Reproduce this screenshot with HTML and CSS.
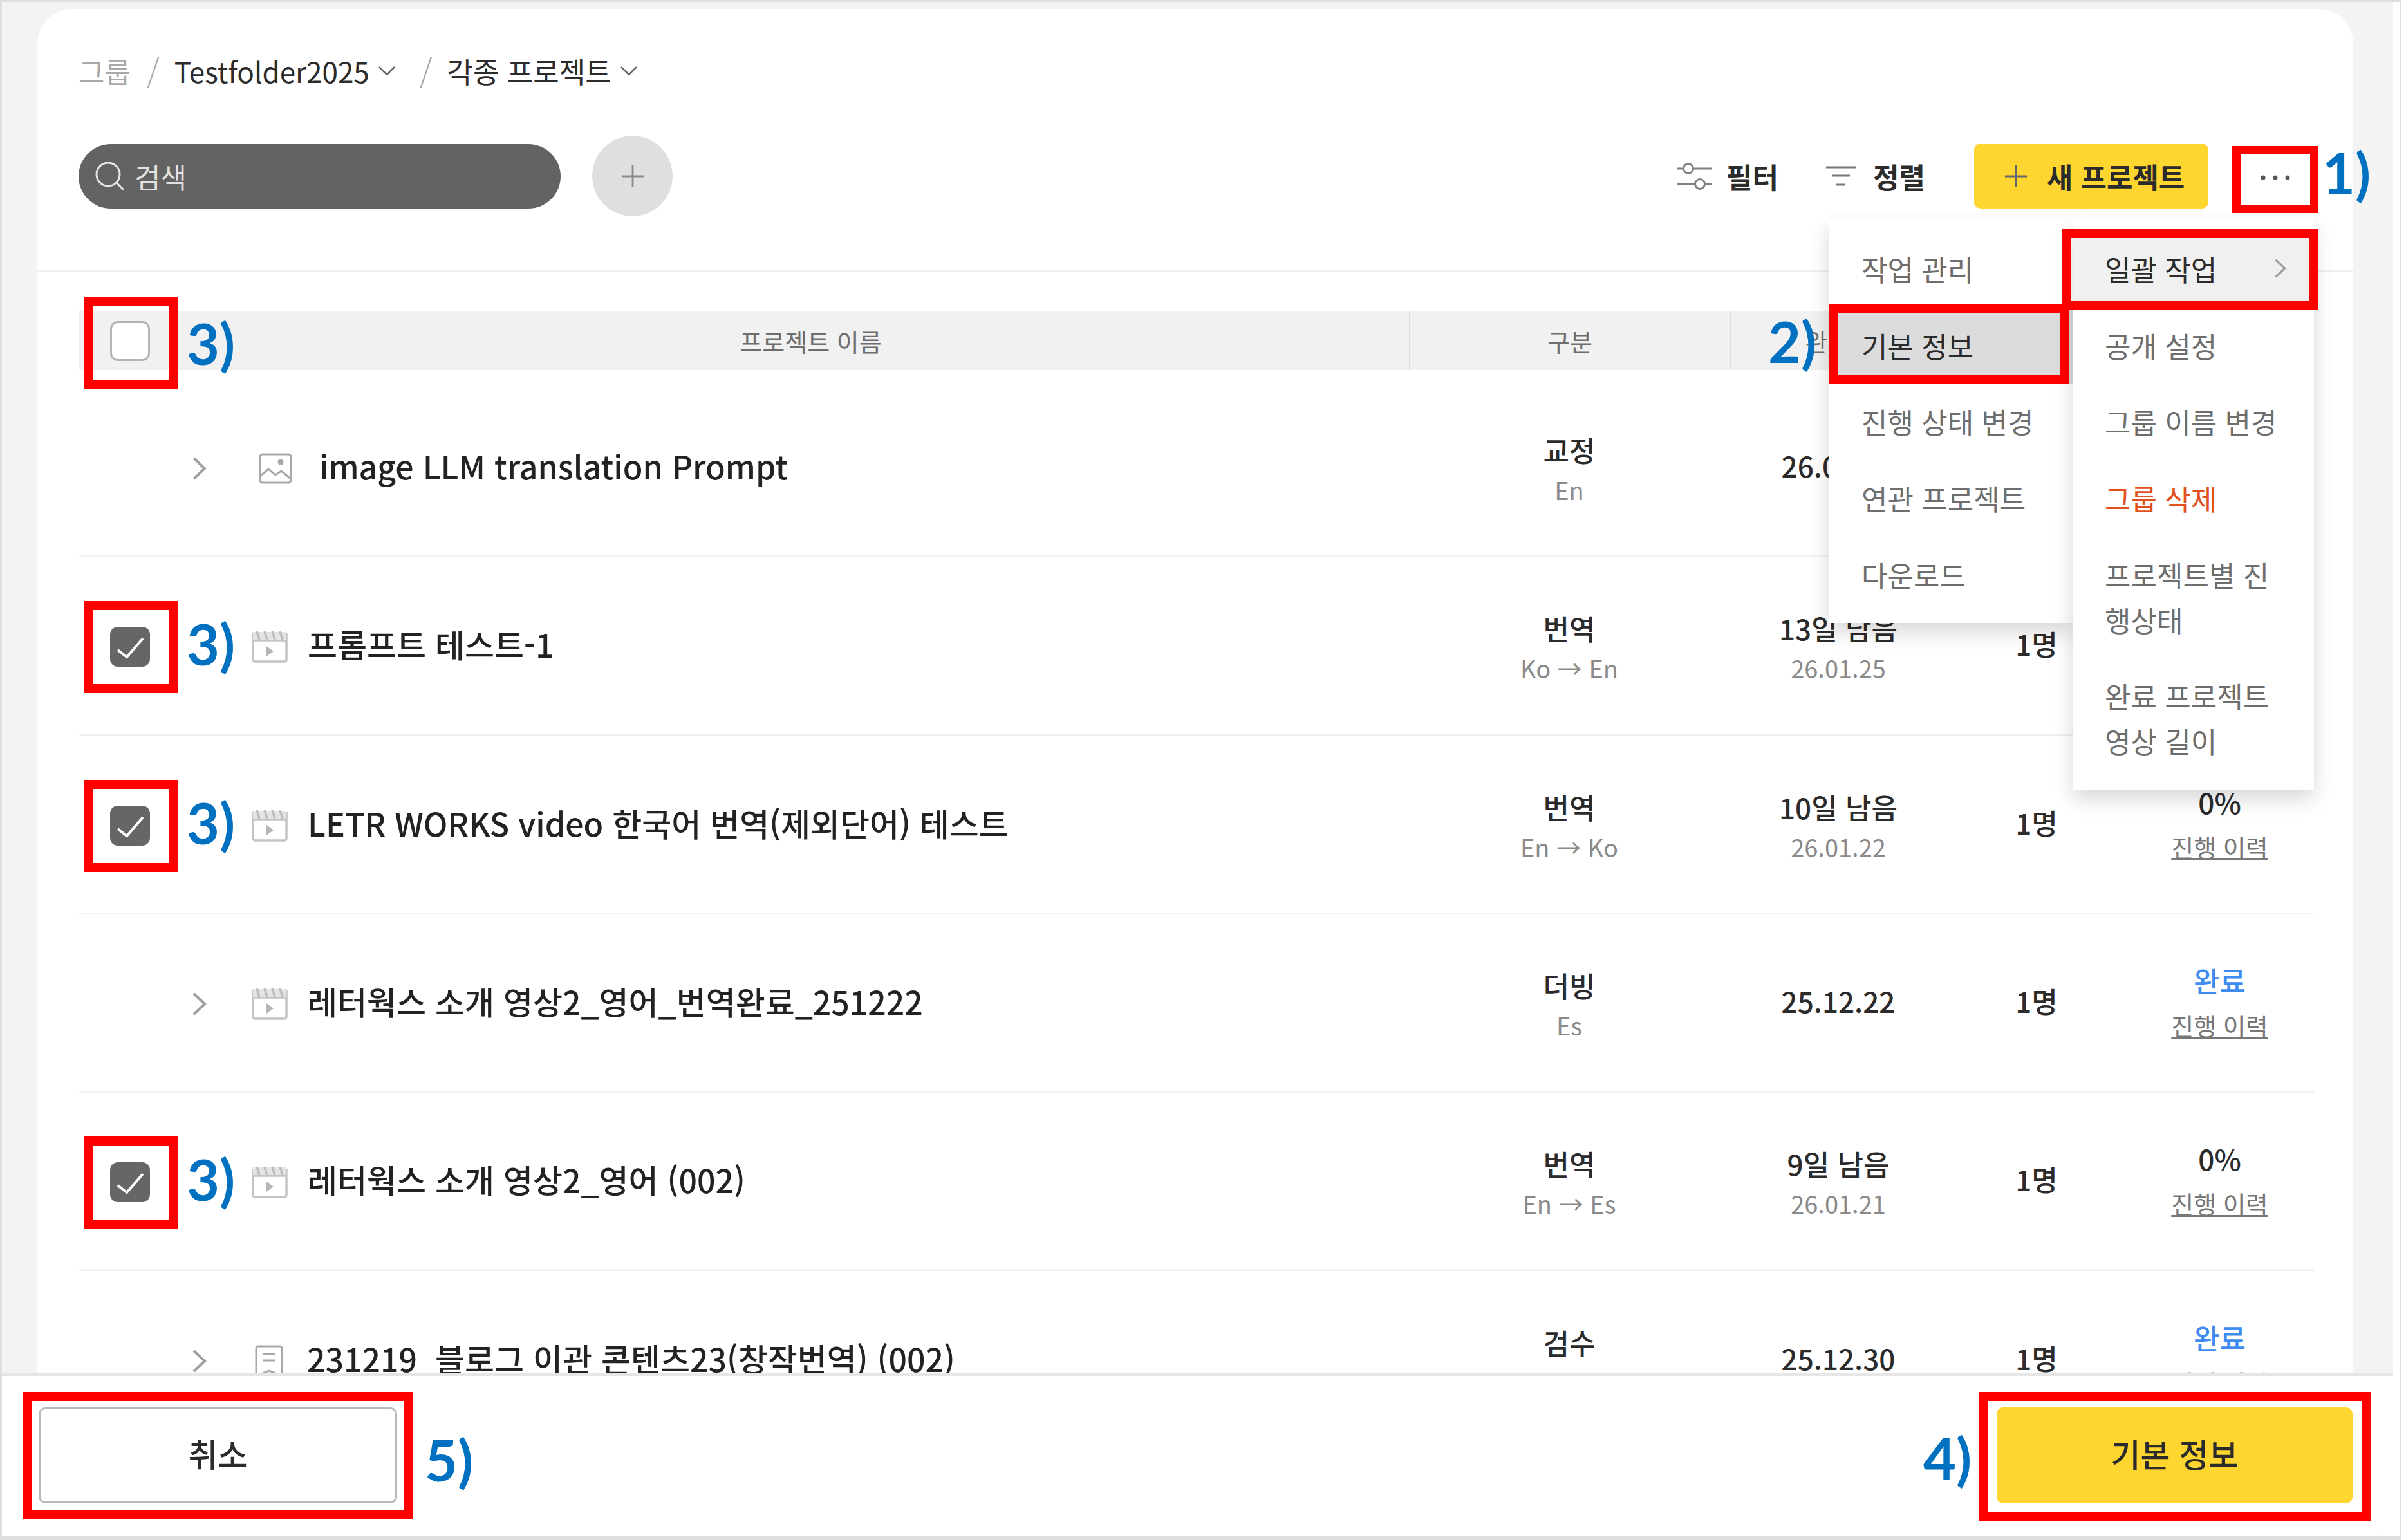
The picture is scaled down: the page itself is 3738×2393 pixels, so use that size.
FILE: index.html
```html
<!DOCTYPE html>
<html lang="ko">
<head>
  <meta charset="UTF-8">
  <meta name="viewport" content="width=device-width, initial-scale=1.0">
  <title>각종 프로젝트</title>
  <link rel="stylesheet" href="styles.css">
</head>
<body>

<svg class="defs" width="0" height="0">
  <symbol id="i-video" viewBox="0 0 56 50">
    <path d="M2 4v41a3 3 0 0 0 3 3h46a3 3 0 0 0 3-3V4M2 15h52" fill="none" stroke="#c4c4c4" stroke-width="3.500"/>
    <path d="M2 2h52v12H2z" fill="#e4e4e4"/>
    <path d="M8 1l4 13M20 1l4 13M32 1l4 13M44 1l4 13" stroke="#bdbdbd" stroke-width="3.500"/>
    <path d="M23 24l11 8-11 8z" fill="#b5b5b5"/>
  </symbol>
  <symbol id="i-image" viewBox="0 0 52 48">
    <rect x="2" y="2" width="48" height="44" rx="4" fill="none" stroke="#a8a8a8" stroke-width="3"/>
    <circle cx="34" cy="14" r="4.500" fill="#a8a8a8"/>
    <path d="M2 36l13-11 11 9 9-6 15 12" fill="none" stroke="#a8a8a8" stroke-width="3"/>
  </symbol>
  <symbol id="i-doc" viewBox="0 0 44 50">
    <path d="M2 48V5a3 3 0 0 1 3-3h34a3 3 0 0 1 3 3v43l-20-8-20 8z" fill="none" stroke="#a8a8a8" stroke-width="3"/>
    <path d="M13 14h18M13 24h18" stroke="#a8a8a8" stroke-width="3"/>
  </symbol>
  <symbol id="i-chev" viewBox="0 0 24 36">
    <path d="M3 2l17 16L3 34" fill="none" stroke="#a0a0a0" stroke-width="4"/>
  </symbol>
  <symbol id="i-check" viewBox="0 0 62 62">
    <path d="M12 36l14 11 25-29" fill="none" stroke="#fff" stroke-width="4"/>
  </symbol>
</svg>

<div class="page">
  <div class="shell">
    <div class="card">
      <div class="crumbs">
        <span class="crumb-root">그룹</span>
        <span class="crumb-sep">/</span>
        <span class="crumb">Testfolder2025</span>
        <svg class="crumb-caret" viewBox="0 0 28 16"><path d="M2 2l12 12L26 2" fill="none" stroke="#666" stroke-width="2.500"/></svg>
        <span class="crumb-sep">/</span>
        <span class="crumb">각종 프로젝트</span>
        <svg class="crumb-caret" viewBox="0 0 28 16"><path d="M2 2l12 12L26 2" fill="none" stroke="#666" stroke-width="2.500"/></svg>
      </div>

      <div class="toolbar">
        <div class="search">
          <svg class="search-icon" viewBox="0 0 46 46"><circle cx="20" cy="20" r="18" fill="none" stroke="#e6e6e6" stroke-width="3"/><path d="M33 33l11 11" stroke="#e6e6e6" stroke-width="3"/></svg>
          <span>검색</span>
        </div>
        <div class="add-round">
          <svg viewBox="0 0 40 40"><path d="M20 2v36M2 20h36" stroke="#8a8a8a" stroke-width="3"/></svg>
        </div>
        <div class="tools">
          <div class="tool">
            <svg class="tool-filter" viewBox="0 0 54 42"><path d="M0 9h10M25 9h29M0 33h27M43 33h11" stroke="#808080" stroke-width="3"/><circle cx="17" cy="9" r="7.500" fill="none" stroke="#808080" stroke-width="3"/><circle cx="35" cy="33" r="7.500" fill="none" stroke="#808080" stroke-width="3"/></svg>
            <span>필터</span>
          </div>
          <div class="tool">
            <svg class="tool-sort" viewBox="0 0 46 36"><path d="M0 4h46M9 17h28M16 31h14" stroke="#777" stroke-width="3"/></svg>
            <span>정렬</span>
          </div>
          <div class="new-btn">
            <svg viewBox="0 0 40 40"><path d="M20 2v36M2 20h36" stroke="#666" stroke-width="3"/></svg>
            <span>새 프로젝트</span>
          </div>
          <div class="more">
            <svg viewBox="0 0 46 8"><circle cx="4" cy="4" r="3.500" fill="#555"/><circle cx="23" cy="4" r="3.500" fill="#555"/><circle cx="42" cy="4" r="3.500" fill="#555"/></svg>
            <i class="mark mark-more"></i>
            <b class="note note-1">1)</b>
          </div>
        </div>

        <div class="menus">
          <ul class="menu menu-main">
            <li>작업 관리</li>
            <li class="menu-picked">기본 정보<i class="mark mark-left"></i></li>
            <li>진행 상태 변경</li>
            <li>연관 프로젝트</li>
            <li>다운로드</li>
          </ul>
          <ul class="menu">
            <li class="menu-open">일괄 작업
              <svg class="menu-chev" viewBox="0 0 24 36"><use href="#i-chev"/></svg>
              <i class="mark mark-right"></i>
            </li>
            <li>공개 설정</li>
            <li>그룹 이름 변경</li>
            <li class="menu-danger">그룹 삭제</li>
            <li>프로젝트별 진행상태</li>
            <li>완료 프로젝트<br>영상 길이</li>
          </ul>
          <b class="note note-2">2)</b>
        </div>
      </div>

      <div class="list">
        <div class="list-head grid">
          <div class="head-title">
            <span class="check-cell">
              <span class="check"></span>
              <i class="mark mark-check"></i>
              <b class="note note-3">3)</b>
            </span>
            <span class="head-name">프로젝트 이름</span>
          </div>
          <div class="head-col">구분</div>
          <div class="head-col">완료일</div>
          <div class="head-col">담당자</div>
          <div class="head-col">상태</div>
        </div>

        <div class="row grid">
          <div class="title">
            <span class="check-cell"></span>
            <svg class="chev"><use href="#i-chev"/></svg>
            <svg class="icon-image"><use href="#i-image"/></svg>
            <span class="name">image LLM translation Prompt</span>
          </div>
          <div class="cell"><span>교정</span><span class="sub">En</span></div>
          <div class="cell"><span>26.01.30</span></div>
          <div class="cell"><span>1명</span></div>
          <div class="cell status"><span>0%</span><span class="log">진행 이력</span></div>
        </div>

        <div class="row grid">
          <div class="title">
            <span class="check-cell">
              <span class="check check-on"><svg viewBox="0 0 62 62"><use href="#i-check"/></svg></span>
              <i class="mark mark-check"></i>
              <b class="note note-3">3)</b>
            </span>
            <span class="chev"></span>
            <svg class="icon-video"><use href="#i-video"/></svg>
            <span class="name">프롬프트 테스트-1</span>
          </div>
          <div class="cell"><span>번역</span><span class="sub">Ko → En</span></div>
          <div class="cell"><span>13일 남음</span><span class="sub">26.01.25</span></div>
          <div class="cell"><span>1명</span></div>
          <div class="cell status"><span>0%</span><span class="log">진행 이력</span></div>
        </div>

        <div class="row grid">
          <div class="title">
            <span class="check-cell">
              <span class="check check-on"><svg viewBox="0 0 62 62"><use href="#i-check"/></svg></span>
              <i class="mark mark-check"></i>
              <b class="note note-3">3)</b>
            </span>
            <span class="chev"></span>
            <svg class="icon-video"><use href="#i-video"/></svg>
            <span class="name">LETR WORKS video 한국어 번역(제외단어) 테스트</span>
          </div>
          <div class="cell"><span>번역</span><span class="sub">En → Ko</span></div>
          <div class="cell"><span>10일 남음</span><span class="sub">26.01.22</span></div>
          <div class="cell"><span>1명</span></div>
          <div class="cell status"><span>0%</span><span class="log">진행 이력</span></div>
        </div>

        <div class="row grid">
          <div class="title">
            <span class="check-cell"></span>
            <svg class="chev"><use href="#i-chev"/></svg>
            <svg class="icon-video"><use href="#i-video"/></svg>
            <span class="name">레터웍스 소개 영상2_영어_번역완료_251222</span>
          </div>
          <div class="cell"><span>더빙</span><span class="sub">Es</span></div>
          <div class="cell"><span>25.12.22</span></div>
          <div class="cell"><span>1명</span></div>
          <div class="cell status"><span class="done">완료</span><span class="log">진행 이력</span></div>
        </div>

        <div class="row grid">
          <div class="title">
            <span class="check-cell">
              <span class="check check-on"><svg viewBox="0 0 62 62"><use href="#i-check"/></svg></span>
              <i class="mark mark-check"></i>
              <b class="note note-3">3)</b>
            </span>
            <span class="chev"></span>
            <svg class="icon-video"><use href="#i-video"/></svg>
            <span class="name">레터웍스 소개 영상2_영어 (002)</span>
          </div>
          <div class="cell"><span>번역</span><span class="sub">En → Es</span></div>
          <div class="cell"><span>9일 남음</span><span class="sub">26.01.21</span></div>
          <div class="cell"><span>1명</span></div>
          <div class="cell status"><span>0%</span><span class="log">진행 이력</span></div>
        </div>

        <div class="row grid">
          <div class="title">
            <span class="check-cell"></span>
            <svg class="chev"><use href="#i-chev"/></svg>
            <svg class="icon-doc"><use href="#i-doc"/></svg>
            <span class="name">231219&nbsp; 블로그 이관 콘텐츠23(창작번역) (002)</span>
          </div>
          <div class="cell"><span>검수</span><span class="sub">Ko</span></div>
          <div class="cell"><span>25.12.30</span></div>
          <div class="cell"><span>1명</span></div>
          <div class="cell status"><span class="done">완료</span><span class="log">진행 이력</span></div>
        </div>
      </div>
    </div>

    <div class="footer">
      <div class="foot-btn btn-cancel">취소<i class="mark mark-cancel"></i><b class="note note-5">5)</b></div>
      <div class="foot-btn btn-ok">기본 정보<i class="mark mark-ok"></i><b class="note note-4">4)</b></div>
    </div>
  </div>
</div>

</body>
</html>
```

FILE: styles.css
```css
* {
  box-sizing: border-box;
}

body {
  margin: 0;
  font-family: "Noto Sans CJK KR", "Noto Sans", sans-serif;
  font-size: 44px;
  color: #2b2b2b;
  background: #fff;
}

.defs {
  position: absolute;
}

.page {
  width: 3731px;
  height: 2393px;
  padding-right: 10px;
  background: #fff;
  border: 3px solid #dedede;
  border-bottom-width: 6px;
  overflow: hidden;
}

.shell {
  display: flex;
  flex-direction: column;
  height: 100%;
  padding-top: 11px;
  background: #f3f3f3;
  border-bottom-right-radius: 30px;
}

.card {
  flex: 1;
  min-height: 0;
  margin: 0 62px 0 55px;
  background: #fff;
  border-radius: 54px 54px 0 0;
}

/* breadcrumb */
.crumbs {
  display: flex;
  align-items: center;
  height: 60px;
  margin: 66px 64px 0;
}

.crumb-root {
  color: #a8a8a8;
}

.crumb-sep {
  margin: 0 23px 0 25px;
  color: #a8a8a8;
  font-weight: 300;
  font-size: 50px;
}

.crumb-caret {
  width: 28px;
  height: 16px;
  margin-left: 13px;
  margin-right: 12px;
}

/* toolbar */
.toolbar {
  position: relative;
  display: flex;
  align-items: center;
  height: 125px;
  margin: 71px 61px 0 64px;
}

.search {
  display: flex;
  align-items: center;
  width: 749px;
  height: 100px;
  padding-left: 26px;
  gap: 15px;
  background: #636363;
  border-radius: 50px;
  color: #e2e2e2;
}

.search-icon {
  width: 46px;
  height: 46px;
}

.add-round {
  display: flex;
  align-items: center;
  justify-content: center;
  width: 125px;
  height: 125px;
  margin-left: 49px;
  background: #dfdfdf;
  border-radius: 50%;
}

.add-round svg {
  width: 38px;
  height: 38px;
}

.tools {
  display: flex;
  align-items: center;
  margin-left: auto;
  font-weight: 700;
}

.tool {
  display: flex;
  align-items: center;
  margin-right: 74px;
}

.tool + .tool {
  margin-right: 76px;
}

.tool-filter {
  width: 54px;
  height: 42px;
  margin-right: 22px;
}

.tool-sort {
  width: 46px;
  height: 36px;
  margin-right: 27px;
}

.new-btn {
  display: flex;
  align-items: center;
  justify-content: center;
  gap: 29px;
  width: 364px;
  height: 101px;
  padding-left: 9px;
  background: #ffd530;
  border-radius: 10px;
}

.new-btn svg {
  width: 38px;
  height: 38px;
}

.more {
  position: relative;
  display: flex;
  align-items: center;
  justify-content: center;
  width: 110px;
  height: 78px;
  margin-left: 49px;
  margin-right: 5px;
}

.more svg {
  width: 46px;
  height: 8px;
  margin-top: 4px;
}

/* dropdown */
.menus {
  position: absolute;
  top: 130px;
  right: 0;
  display: flex;
  align-items: flex-start;
  z-index: 5;
}

.menu {
  position: relative;
  width: 375px;
  margin: 0;
  padding: 18px 0 16px;
  list-style: none;
  background: #fff;
  box-shadow: 0 14px 30px rgba(0, 0, 0, 0.16);
  color: #6e6e6e;
  line-height: 70px;
}

.menu-main {
  width: 378px;
}

.menu li {
  position: relative;
  padding: 24.300px 50px 24.300px 50px;
}

.menu-picked {
  background: #dcdcdc;
  color: #2b2b2b;
}

.menu-open {
  background: #f0f0f0;
  color: #2b2b2b;
}

.menu-danger {
  color: #e2501c;
}

.menu-chev {
  position: absolute;
  top: 42px;
  right: 42px;
  width: 20px;
  height: 32px;
}

/* table */
.list {
  margin-top: 83px;
  padding: 62px 61px 0 64px;
  border-top: 3px solid #f0f0f0;
}

.grid {
  display: grid;
  grid-template-columns: 2067px 498px 338px 278px 291px;
  align-items: center;
}

.list-head {
  height: 91px;
  margin-bottom: 14px;
  background: #f1f1f1;
  font-size: 38px;
  color: #6e6e6e;
}

.head-title {
  display: flex;
  align-items: center;
  height: 100%;
}

.head-name {
  width: 1955px;
  padding-left: 96px;
  text-align: center;
}

.head-col {
  display: flex;
  align-items: center;
  justify-content: center;
  height: 100%;
  border-left: 2px solid #dcdcdc;
}

.row {
  height: 277.300px;
  padding-top: 4px;
  border-bottom: 3px solid #f1f1f1;
}

.title {
  display: flex;
  align-items: center;
  font-size: 50px;
  font-weight: 500;
  color: #222;
}

.name {
  margin-bottom: 10px;
}

.check-cell {
  position: relative;
  display: flex;
  flex: 0 0 112px;
  height: 62px;
  padding-left: 49px;
}

.check {
  display: block;
  width: 62px;
  height: 62px;
  background: #fff;
  border: 3px solid #b4b4b4;
  border-radius: 12px;
}

.check-on {
  background: #666;
  border: none;
}

.check-on svg {
  display: block;
  width: 62px;
  height: 62px;
}

.chev {
  flex: 0 0 24px;
  width: 24px;
  height: 36px;
  margin-left: 64px;
}

.icon-video {
  width: 56px;
  height: 50px;
  margin-left: 69px;
  margin-right: 31px;
}

.icon-image {
  width: 52px;
  height: 48px;
  margin-left: 80px;
  margin-right: 42px;
}

.icon-doc {
  width: 44px;
  height: 50px;
  margin-left: 74px;
  margin-right: 37px;
}

.cell {
  display: flex;
  flex-direction: column;
  align-items: center;
  padding-top: 4px;
  line-height: 62px;
  font-weight: 500;
  color: #2b2b2b;
}

.cell > span:only-child {
  margin-bottom: 14px;
}

.status > span:first-child {
  margin-top: -8px;
  margin-bottom: 8px;
}

.sub {
  font-size: 38px;
  font-weight: 400;
  color: #8a8a8a;
}

.log {
  font-size: 38px;
  font-weight: 400;
  color: #777;
  text-decoration: underline;
}

.done {
  color: #3f8cf0;
}

/* bottom bar */
.footer {
  position: relative;
  display: flex;
  justify-content: space-between;
  align-items: center;
  flex: 0 0 254px;
  padding: 0 63px 3px 57px;
  background: #fff;
  border-top: 5px solid #e6e6e6;
  border-bottom-right-radius: 30px;
  z-index: 2;
}

.foot-btn {
  position: relative;
  display: flex;
  align-items: center;
  justify-content: center;
  height: 149px;
  padding-bottom: 6px;
  font-size: 50px;
  font-weight: 500;
  border-radius: 10px;
}

.btn-cancel {
  width: 557px;
  background: #fff;
  border: 3px solid #b8b8b8;
}

.btn-ok {
  width: 553px;
  background: #ffd530;
}

/* annotations drawn on top of the screenshot */
.mark {
  position: absolute;
  border: 14px solid #ff0000;
  pointer-events: none;
}

.mark-more {
  inset: -8px -12px -18px -12px;
  border-width: 13px;
}

.mark-left {
  top: -6px;
  bottom: 0;
  left: 0;
  right: 5px;
}

.mark-right {
  top: -3px;
  bottom: -3px;
  left: -17px;
  right: -6px;
  z-index: 1;
}

.mark-check {
  top: -40px;
  bottom: -41px;
  left: 9px;
  width: 145px;
}

.list-head .mark-check {
  top: -37px;
  bottom: -44px;
}

.mark-cancel {
  inset: -27px -28px -27px -27px;
}

.mark-ok {
  inset: -24px -28px -28px -27px;
}

.note {
  position: absolute;
  font-family: "Lato", sans-serif;
  font-size: 88px;
  font-weight: 700;
  line-height: 88px;
  color: #0070c0;
  white-space: nowrap;
}

.note-1 {
  left: 128px;
  top: -11px;
}

.note-2 {
  left: -95px;
  top: 145px;
}

.note-3 {
  left: 168px;
  top: -18px;
}

.list-head .note-3 {
  top: -10px;
}

.note-4 {
  left: -114px;
  top: 34px;
}

.note-5 {
  left: 597px;
  top: 34px;
}
```
